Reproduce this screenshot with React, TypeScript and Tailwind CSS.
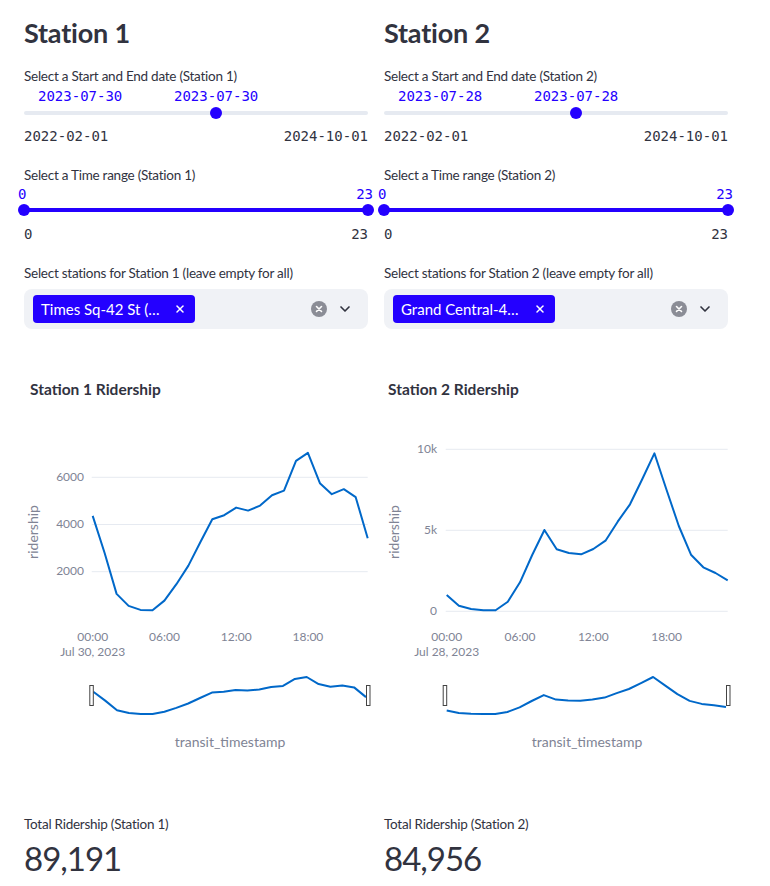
import { ChevronDown, X } from 'lucide-react';

const S1 = [4364, 2784, 1059, 550, 381, 368, 775, 1470, 2258, 3250, 4224, 4393, 4717, 4590, 4800, 5240, 5436, 6695, 7034, 5750, 5283, 5495, 5157, 3419];
const S2 = [1006, 346, 142, 62, 62, 593, 1790, 3475, 5019, 3827, 3599, 3519, 3846, 4358, 5531, 6605, 8148, 9753, 7488, 5265, 3494, 2716, 2364, 1914];

interface ChartProps {
  title: string;
  titleX: number;
  data: number[];
  x0: number;
  yZero: number;
  yScale: number;
  ticks: { v: number; label: string }[];
  tickRight: number;
  date: string;
  ylabelX: number;
  rsX0: number;
  xlabelX: number;
}

const Chart = ({ title, titleX, data, x0, yZero, yScale, ticks, tickRight, date, ylabelX, rsX0, xlabelX }: ChartProps) => {
  const x1 = 343.7;
  const step = (x1 - x0) / 23;
  const line = data.map((v, i) => `${(x0 + i * step).toFixed(1)},${(yZero - v * yScale).toFixed(1)}`).join(' ');

  // range slider preview
  const min = Math.min(...data);
  const max = Math.max(...data);
  const rsX1 = 342;
  const rsTop = 307;
  const rsBottom = 344;
  const rsStep = (rsX1 - rsX0) / 23;
  const rs = data
    .map((v, i) => `${(rsX0 + i * rsStep).toFixed(1)},${(rsBottom - ((v - min) / (max - min)) * (rsBottom - rsTop)).toFixed(1)}`)
    .join(' ');

  const hours = [0, 6, 12, 18];
  const tickColor = '#808495';

  return (
    <svg width={344} height={420} className="block overflow-visible" style={{ fontFamily: 'Lato, sans-serif' }}>
      <text x={titleX} y={21} dominantBaseline="middle" fontSize={15.5} fontWeight={700} fill="#31333f">
        {title}
      </text>

      {ticks.map((t) => (
        <g key={t.label}>
          <line x1={x0 - 1} x2={x1} y1={yZero - t.v * yScale} y2={yZero - t.v * yScale} stroke="#e6eaf1" strokeWidth={1} />
          <text x={tickRight} y={yZero - t.v * yScale + 0.5} dominantBaseline="middle" textAnchor="end" fontSize={12} fill={tickColor}>
            {t.label}
          </text>
        </g>
      ))}

      <text
        x={ylabelX}
        y={162}
        transform={`rotate(-90 ${ylabelX} 162)`}
        textAnchor="middle"
        dominantBaseline="middle"
        fontSize={14}
        fill={tickColor}
      >
        ridership
      </text>

      <polyline points={line} fill="none" stroke="#0068c9" strokeWidth={2} strokeLinejoin="round" />

      {hours.map((h) => (
        <text key={h} x={x0 + h * step} y={268} textAnchor="middle" dominantBaseline="middle" fontSize={12} fill={tickColor}>
          {String(h).padStart(2, '0')}:00
        </text>
      ))}
      <text x={x0} y={283} textAnchor="middle" dominantBaseline="middle" fontSize={12} fill={tickColor}>
        {date}
      </text>

      <polyline points={rs} fill="none" stroke="#0068c9" strokeWidth={2} strokeLinejoin="round" />
      <rect x={rsX0 - 3.5} y={315.5} width={3.5} height={20} fill="#fff" stroke="#444" strokeWidth={1} />
      <rect x={rsX1 + 0.5} y={315.5} width={3.5} height={20} fill="#fff" stroke="#444" strokeWidth={1} />

      <text x={xlabelX} y={373} textAnchor="middle" dominantBaseline="middle" fontSize={14} fill={tickColor}>
        transit_timestamp
      </text>
    </svg>
  );
};

interface StationProps {
  n: number;
  date: string;
  station: string;
  total: string;
  chart: ChartProps;
}

const StationColumn = ({ n, date, station, total, chart }: StationProps) => (
  <div className="flex flex-col text-[#31333f]">
    <h2 className="mt-[14px] h-[38px] text-[27px] font-bold leading-[38px] tracking-[-0.2px]">Station {n}</h2>

    <div className="mt-[14px] h-[20px] text-[13.5px] leading-[20px] tracking-[-0.25px]">Select a Start and End date (Station {n})</div>
    <div className="relative h-[20px] font-['DejaVu_Sans_Mono',monospace] text-[14px] leading-[20px] text-[#2400ff]">
      <span className="absolute left-[14px] top-0">{date}</span>
      <span className="absolute left-[150px] top-0">{date}</span>
    </div>
    <div className="relative flex h-[14px] items-center">
      <div className="h-[4px] w-full rounded-full bg-[#e6eaf1]" />
      <div className="absolute left-[186px] h-[12px] w-[12px] rounded-full bg-[#2400ff]" />
    </div>
    <div className="mt-[6px] flex h-[20px] justify-between font-['DejaVu_Sans_Mono',monospace] text-[14px] leading-[20px]">
      <span>2022-02-01</span>
      <span>2024-10-01</span>
    </div>

    <div className="mt-[19px] h-[20px] text-[13.5px] leading-[20px] tracking-[-0.25px]">Select a Time range (Station {n})</div>
    <div className="relative h-[18px] font-['DejaVu_Sans_Mono',monospace] text-[14px] leading-[18px] text-[#2400ff]">
      <span className="absolute left-[-6px] top-0">0</span>
      <span className="absolute right-[-5px] top-0">23</span>
    </div>
    <div className="relative flex h-[14px] items-center">
      <div className="h-[4px] w-full bg-[#2400ff]" />
      <div className="absolute left-[-6px] h-[12px] w-[12px] rounded-full bg-[#2400ff]" />
      <div className="absolute right-[-6px] h-[12px] w-[12px] rounded-full bg-[#2400ff]" />
    </div>
    <div className="mt-[7px] flex h-[20px] justify-between font-['DejaVu_Sans_Mono',monospace] text-[14px] leading-[20px]">
      <span>0</span>
      <span>23</span>
    </div>

    <div className="mt-[19px] h-[20px] text-[13.5px] leading-[20px] tracking-[-0.25px]">Select stations for Station {n} (leave empty for all)</div>
    <div className="mt-[6px] flex h-[40px] items-center rounded-lg bg-[#f0f2f6] pl-[9px] pr-[15px]">
      <div className="flex h-[28px] w-[162px] items-center justify-between rounded-[4px] bg-[#2400ff] pl-[8px] pr-[9px] text-[15px] text-white">
        <span className="whitespace-nowrap">{station}</span>
        <X size={12} strokeWidth={3} />
      </div>
      <div className="ml-auto flex items-center gap-[10px]">
        <svg width={16} height={16} viewBox="0 0 16 16">
          <circle cx={8} cy={8} r={8} fill="#8b8d96" />
          <path d="M5.5 5.5l5 5M10.5 5.5l-5 5" stroke="#fff" strokeWidth={1.6} strokeLinecap="round" />
        </svg>
        <ChevronDown size={16} strokeWidth={2.5} />
      </div>
    </div>

    <div className="mt-[41px]">
      <Chart {...chart} />
    </div>

    <div className="mt-[24px] h-[20px] text-[13.5px] leading-[20px] tracking-[-0.25px]">Total Ridership (Station {n})</div>
    <div className="mt-[4px] h-[40px] text-[33px] leading-[40px] tracking-[-1px]">{total}</div>
  </div>
);

export default function App() {
  return (
    <div className="grid w-[728px] grid-cols-2 gap-4 bg-white pl-6 font-['Lato',sans-serif]">
      <StationColumn
        n={1}
        date="2023-07-30"
        station="Times Sq-42 St (…"
        total="89,191"
        chart={{
          title: 'Station 1 Ridership',
          titleX: 6,
          data: S1,
          x0: 68.7,
          yZero: 248.9,
          yScale: 47.2 / 2000,
          ticks: [
            { v: 2000, label: '2000' },
            { v: 4000, label: '4000' },
            { v: 6000, label: '6000' },
          ],
          tickRight: 60,
          date: 'Jul 30, 2023',
          ylabelX: 10.5,
          rsX0: 69.3,
          xlabelX: 206,
        }}
      />
      <StationColumn
        n={2}
        date="2023-07-28"
        station="Grand Central-4…"
        total="84,956"
        chart={{
          title: 'Station 2 Ridership',
          titleX: 4,
          data: S2,
          x0: 62.7,
          yZero: 241.3,
          yScale: 81 / 5000,
          ticks: [
            { v: 0, label: '0' },
            { v: 5000, label: '5k' },
            { v: 10000, label: '10k' },
          ],
          tickRight: 53,
          date: 'Jul 28, 2023',
          ylabelX: 11,
          rsX0: 62.7,
          xlabelX: 203,
        }}
      />
    </div>
  );
}
